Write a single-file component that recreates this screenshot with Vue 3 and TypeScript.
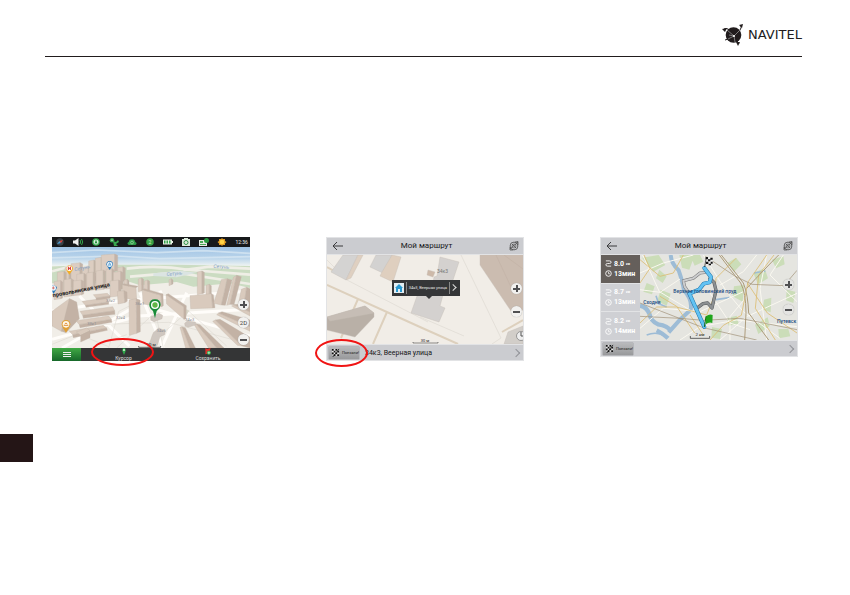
<script setup lang="ts">
interface Block { x: number; y: number; w: number; h: number; d: number }
interface Route { km: string; min: string; active: boolean }

const blocks: Block[] = [
  { x: 45, y: 92, w: 12, h: 50, d: 6 },
  { x: 63, y: 80, w: 27, h: 70, d: 8 },
  { x: 97, y: 92, w: 18, h: 60, d: 7 },
  { x: 116, y: 72, w: 16, h: 64, d: 7 },
  { x: 136, y: 64, w: 18, h: 54, d: 6 },
  { x: 154, y: 54, w: 40, h: 52, d: 9 },
  { x: 203, y: 92, w: 16, h: 44, d: 7 },
  { x: 22, y: 106, w: 20, h: 60, d: 7 },
  { x: 80, y: 112, w: 22, h: 52, d: 7 },
  { x: 110, y: 108, w: 20, h: 54, d: 7 },
  { x: 138, y: 102, w: 22, h: 58, d: 7 },
  { x: 168, y: 98, w: 18, h: 58, d: 7 },
  { x: 190, y: 106, w: 22, h: 54, d: 8 },
  { x: 12, y: 134, w: 20, h: 54, d: 6 },
  { x: 42, y: 128, w: 22, h: 52, d: 7 },
  { x: 70, y: 132, w: 24, h: 44, d: 7 },
  { x: 180, y: 132, w: 26, h: 48, d: 8 },
  { x: 265, y: 126, w: 10, h: 38, d: 6 },
  { x: 283, y: 132, w: 10, h: 34, d: 6 },
  { x: 222, y: 130, w: 10, h: 26, d: 5 },
  { x: 357, y: 128, w: 7, h: 18, d: 5 },
  { x: 442, y: 105, w: 14, h: 68, d: 7 },
  { x: 468, y: 145, w: 10, h: 34, d: 6 },
]

const slabs: string[][] = [
  ['217,146 258,155 260,195 217,184', '217,146 222,143 264,151 258,155'],
  ['277,161 333,178 335,212 279,204', '277,161 284,158 339,174 340,209 335,212 333,178'],
  ['348,176 402,213 402,250 350,204', '348,176 355,173 409,209 408,248 402,250 402,213'],
  ['420,179 484,173 488,216 422,218', '484,173 490,176 495,215 488,216'],
  ['514,131 532,128 514,207 491,202', '532,128 546,132 526,208 514,207'],
  ['550,124 560,118 540,205 530,208', '560,118 574,122 552,206 540,205'],
  ['574,160 590,154 580,219 563,215', '590,154 600,158 600,224 580,219'],
  ['6,226 58,188 70,194 34,286 6,270', '58,188 80,198 88,248 48,290 34,286'],
  ['96,196 170,186 176,198 106,208', '106,208 176,198 176,205 108,214'],
  ['90,226 188,212 194,224 98,238', '98,238 194,224 195,235 100,247'],
  ['78,254 176,240 184,250 88,266', '88,266 184,250 186,259 90,275'],
  ['58,286 160,268 170,276 68,296', '68,296 170,276 172,283 70,305'],
  ['130,176 172,172 180,180 138,186', '138,186 180,180 180,187 139,192'],
  ['237,192 259,188 260,292 238,298', '259,188 270,192 271,287 260,292'],
  ['202,166 222,164 224,200 204,204', '222,164 231,168 232,196 224,200'],
  ['79,288 110,276 120,284 92,298', '92,298 120,284 120,305 92,318'],
  ['390,274 396,272 420,336 407,336', '396,272 406,275 436,336 420,336'],
  ['432,266 438,263 500,336 476,336', '438,263 450,266 522,336 500,336'],
  ['488,256 496,252 576,330 562,328', '496,252 510,250 600,304 600,336 576,330'],
  ['500,236 506,231 600,272 600,286', '506,231 516,227 600,252 600,272'],
  ['545,210 552,206 600,228 600,240', '552,206 562,205 600,218 600,228'],
]

const houses: string[] = [
  '302,242 326,232 338,238 336,248 312,257 302,253',
  '306,300 310,290 326,276 346,284 344,296 330,302 322,328 308,336 292,334 302,312',
  '404,262 412,255 436,258 438,266 414,274 405,270',
]

const routes: Route[] = [
  { km: '8.0', min: '13мин', active: true },
  { km: '8.7', min: '13мин', active: false },
  { km: '8.2', min: '14мин', active: false },
]

const front = (b: Block): string =>
  `${b.x},${b.y + 3} ${b.x + b.w},${b.y} ${b.x + b.w},${b.y + b.h} ${b.x},${b.y + b.h + 3}`
const side = (b: Block): string =>
  `${b.x + b.w},${b.y} ${b.x + b.w + b.d},${b.y + 4} ${b.x + b.w + b.d},${b.y + b.h - 2} ${b.x + b.w},${b.y + b.h}`
</script>

<template>
  <div class="page">
    <header class="masthead">
      <a class="brand" href="#" aria-label="Navitel">
        <svg viewBox="0 0 22 22" class="globe" aria-hidden="true">
          <circle cx="11.500" cy="11" r="7.800" fill="#211c1d" />
          <path d="M2 5q4-2 8 4t7 11M19 2q1 3-5 9-5 4-11 5" fill="none" stroke="#211c1d" stroke-width="1" />
          <path d="M5 6l7 6 1 6M12 12l6-6M12 12l-6 3M7 11l5 1" fill="none" stroke="#bbb" stroke-width=".6" />
          <path d="M0 5l5-1-2 4zM17 1l4-1-1 4zM14 18l4 0-2 4z" fill="#211c1d" />
          <circle cx="12" cy="12" r="1" fill="#fff" />
        </svg>
        <span>NAVITEL</span>
      </a>
    </header>

    <main class="figures">
      <figure class="shot">
        <div class="status">
          <svg viewBox="0 0 10 8"><circle cx="5" cy="4" r="3.700" fill="#39434a" /><path d="M2 6l2.500-3L6 5z" fill="#4ba2da" /><path d="M8 2L4.500 3 6 5z" fill="#e2433a" /></svg>
          <svg viewBox="0 0 10 8"><path d="M0 2.500h2L5.500 0v8L2 5.500H0z" fill="#eee" /><path d="M7 2q1.500 2 0 4M8.500 1q2.500 3 0 6" stroke="#36a64b" fill="none" /></svg>
          <svg viewBox="0 0 10 8"><circle cx="5" cy="4" r="3.800" fill="#32a84a" /><circle cx="5" cy="4" r="2.500" fill="#d9f0dc" /><path d="M3.500 6L5 1.500 6.500 6 5 5z" fill="#1f8a39" /></svg>
          <svg viewBox="0 0 10 8"><circle cx="3" cy="2.200" r="2.200" fill="#39a54e" /><path d="M4 3l3 1 2-2 1 2-3 2 2 2H5z" fill="#39a54e" /><path d="M2 2.200h2" stroke="#d7edd9" stroke-width=".8" /></svg>
          <svg viewBox="0 0 12 8"><path d="M2 7.500q-3-2 0-3.500Q3 0 6 1q3-1 4 3 3 2 0 3.500z" fill="#2e9b47" /><circle cx="6" cy="4.700" r="1.700" fill="none" stroke="#a5d9ad" stroke-width=".8" /></svg>
          <svg viewBox="0 0 10 8"><circle cx="5" cy="4" r="3.800" fill="#37a046" /><text x="5" y="6" text-anchor="middle" font-size="5" fill="#d8f0c8">2</text></svg>
          <svg viewBox="0 0 10 8"><path d="M0 1.500h9v1.500h1v2H9v1.500H0z" fill="#e8f1e6" /><path d="M1 2.500h1.500v3H1zM3.500 2.500H5v3H3.500zM6 2.500h1.500v3H6z" fill="#35a24a" /></svg>
          <svg viewBox="0 0 10 8"><path d="M3 0h4v1h2v7H1V1h2z" fill="#dcebdc" /><circle cx="5" cy="4.500" r="2" fill="none" stroke="#329448" /></svg>
          <svg viewBox="0 0 10 8"><path d="M0 2h8v6H0z" fill="#e5ebe3" /><path d="M1 3h3v2H1zM1 6h6v1H1z" fill="#49a957" /><circle cx="7.500" cy="2.500" r="2.500" fill="#2a9b41" /></svg>
          <svg viewBox="0 0 10 8"><path d="M5 0l1 1 2 0 0 2 1.500 1L8 5.500 8 7 6 7 5 8 4 7 2 7 2 5.500.500 4 2 3 2 1 4 1z" fill="#df9a20" /><circle cx="5" cy="4" r="2.300" fill="#ffd344" /></svg>
          <time>12:36</time>
        </div>
        <div class="canvas city">
          <svg viewBox="6 33 594 303" preserveAspectRatio="xMidYMid slice" role="img" aria-label="3D карта города">
            <defs>
              <linearGradient id="sky" x2="0" y2="1"><stop stop-color="#9ec2e4" /><stop offset=".6" stop-color="#b9d4ea" /><stop offset="1" stop-color="#f0f4f2" /></linearGradient>
            </defs>
            <path fill="#f1eee8" d="M0 30h606v310H0z" />
            <path fill="url(#sky)" d="M0 30h606v60H0z" />
            <path d="M0 50l140-8 180 8 140-6 140 8M0 66l200-6 130 8 270-6" fill="none" stroke="#dce9f3" stroke-width="5" opacity=".7" />
            <path d="M0 92l130-6h250l220 4v66l-60-14-110 10-50-14-110 10-60-20-60 14-150 0z" fill="#cbdcc2" />
            <path d="M6 106l60-16 60 2M230 98q90-12 190 4l180 14M240 122l140-12 220 34M400 102l80-10 120 6" fill="none" stroke="#efeee6" stroke-width="8" />
            <path d="M310 112l80-8 50 6-60 14-70-4z" fill="#dbe4e2" />
            <path d="M6 225l200-30 394-30M6 310l260-70 334-20M88 180l150 150M270 170l70 166M300 215l300 85M36 336l300-170M410 170l-76 166M420 250l80 86" fill="none" stroke="#fffdfa" stroke-width="9" />
            <path d="M6 325l150-60 200-6 244 66M200 336l130-120M300 325l110-95M6 262l170 70M410 220l120 110M176 336l30-110 60-30M120 336l110-40M340 336l-20-90" fill="none" stroke="#d9d4cc" stroke-width="1.500" />
            <path d="M388 238l20-18 10 4-14 22z" fill="#d9d6c8" />
            <g stroke="#c0b2a7" stroke-width="1">
              <template v-for="(b, i) in blocks" :key="i">
                <polygon :points="front(b)" fill="#dccdc1" />
                <polygon :points="side(b)" fill="#c4b4a8" />
              </template>
              <template v-for="(s, i) in slabs" :key="'s' + i">
                <polygon :points="s[0]" fill="#d9cabd" />
                <polygon :points="s[1]" fill="#c3b2a5" />
              </template>
              <polygon v-for="(h, i) in houses" :key="'h' + i" :points="h" fill="#cfc7c0" />
            </g>
            <g class="house-no">
              <text x="168" y="197">33к2</text><text x="198" y="248">32к4</text><text x="112" y="267">33к1</text><text x="256" y="208">36к1</text><text x="320" y="288">34к5</text><text x="406" y="254">34к3</text>
            </g>
            <text x="350" y="120" class="water" transform="rotate(-6 350 120)">Сетунь</text>
            <text x="490" y="95" class="water" transform="rotate(5 490 95)">Сетунь</text>
            <text x="74" y="106" class="water" transform="rotate(-12 74 106)">Сетунь</text>
            <text x="9" y="184" class="street" transform="rotate(-11 9 184)">провольинская улица</text>
            <path d="M50 104q-4-14 8-16 14 2 10 14l-10 14z" fill="#f2ad27" /><circle cx="58" cy="97" r="8" fill="#fff" /><path d="M55 92v10M61 92v10M55 97h6" stroke="#d52d24" stroke-width="3" />
            <path d="M169 86q0-11 10-11t10 11l-10 16z" fill="#2878b9" /><circle cx="179" cy="85" r="8" fill="#eaf5fd" /><path d="M175 89l4-9 4 9M176 87h6" stroke="#3b91cb" fill="none" stroke-width="2" />
            <path d="M2 152q8-9 18 0 2 6-10 22z" fill="#2878b9" /><circle cx="10" cy="156" r="8" fill="#eaf5fd" /><path d="M5 156h9M10 151v9" stroke="#d1473b" stroke-width="2" />
            <path d="M35 266q0-14 13-14t13 14q-2 10-13 24-11-14-13-24z" fill="#e0a035" /><circle cx="48" cy="265" r="10" fill="#fff8e8" /><path d="M41 268h14M44 264q4-6 8 0" stroke="#e0913a" fill="none" stroke-width="3" />
            <path d="M298 207q0-17 17-17t17 17q-1 10-12 18l-5 22-6-22q-11-8-11-18z" fill="#188b39" /><circle cx="315" cy="207" r="12" fill="#fff" /><circle cx="315" cy="207" r="8" fill="#62b547" />
            <text x="290" y="329" class="scale">50 м</text>
            <path d="M266 330v4h66v-4" stroke="#222" fill="none" stroke-width="2" />
          </svg>
          <button class="round plus" aria-label="Приблизить"></button>
          <button class="round mode">2D</button>
          <button class="round minus" aria-label="Отдалить"></button>
        </div>
        <nav class="dock">
          <button class="menu" aria-label="Меню"><i></i><i></i><i></i></button>
          <button class="tool">
            <svg viewBox="0 0 8 8"><path d="M2 2.500Q2 0 4 0t2 2.500Q6 4 4 8 2 4 2 2.500z" fill="#2ea94b" /><circle cx="4" cy="2.300" r="1.100" fill="#e8f4df" /></svg>
            <span>Курсор</span>
          </button>
          <button class="tool">
            <svg viewBox="0 0 8 8"><path d="M1 0l2 1 4-1-1 3 1 3-6 1z" fill="#d6312c" /><circle cx="5" cy="5.500" r="2.300" fill="#2ea94b" /><path d="M5 4v3M3.500 5.500h3" stroke="#fff" stroke-width=".6" /></svg>
            <span>Сохранить</span>
          </button>
        </nav>
        <div class="mark mark-cursor"></div>
      </figure>

      <figure class="shot framed">
        <div class="bar">
          <button class="back" aria-label="Назад"><svg viewBox="0 0 12 8"><path d="M11 4H1M5 0L1 4l4 4" fill="none" stroke="#3b3b3d" /></svg></button>
          <h2>Мой маршрут</h2>
          <button class="globe-btn" aria-label="Обзор"><svg viewBox="0 0 10 10"><circle cx="5" cy="5" r="3.900" fill="none" stroke="#444" stroke-width=".8" /><circle cx="5" cy="5" r="2" fill="none" stroke="#555" stroke-width=".7" /><path d="M1 8l8-7M6 1l3-.500L9 4M1 6v3h3M3 3l4 4" fill="none" stroke="#444" stroke-width=".7" /></svg></button>
        </div>
        <div class="canvas block">
          <svg viewBox="0 0 196 89" preserveAspectRatio="xMidYMid slice" role="img" aria-label="Карта: Веерная улица">
            <path fill="#f1ede7" d="M0 0h196v89H0z" />
            <path d="M0 5L20 25 101 67M93 62l44 19M134 0l40 83-9 6" fill="none" stroke="#dedad3" stroke-width=".7" />
            <path d="M0 30l93 42 38 17M31 44L14 83M60 57L46 89M175 77l21-12M0 12l9 5" fill="none" stroke="#ddd0bd" stroke-width="2" />
            <g stroke="#c4beb7" stroke-width=".4">
              <path d="M16 0h15L19 25 4 17z" fill="#d4d3d2" /><path d="M31 0h5L24 23l-5 2z" fill="#dfd0c1" />
              <path d="M49 0h16l-7 19-15-7z" fill="#d3d2d1" /><path d="M65 0l9 2-8 25-13-6 2-4z" fill="#dfcfbf" />
              <path d="M0 62l38-11 9 7v4L28 82 0 75z" fill="#b9b0a7" /><path d="M0 62l38-11 9 7-44 8z" fill="#c6bdb5" />
              <path d="M153 0h43v55l-10 4-33-49z" fill="#cbbcb0" /><path d="M169 0l15 32M177 0l19 14" fill="none" stroke="#beac9e" />
              <path d="M113 2l19 5-9 27-17-6 1-6 3-1zM90 41l15-7 11 6-3 11 5 2-6 14-28-9z" fill="#d4d1cf" />
              <path d="M101 15l7 2-2 5-6-2z" fill="#cdb9a9" /><path d="M181 77l15-6v18h-19z" fill="#d2cec9" />
            </g>
            <circle cx="194" cy="81" r="4.500" fill="#eee" stroke="#777" stroke-width=".7" /><path d="M194 77v4h3" fill="none" stroke="#555" />
            <text x="110" y="18" class="lot">34к3</text>
            <text x="98" y="87" text-anchor="middle" class="scale-label">30 м</text>
            <path d="M86 87v1h25v-1" stroke="#222" fill="none" stroke-width=".5" />
          </svg>
          <button class="callout">
            <svg viewBox="0 0 10 10"><path fill="#e3eef3" d="M0 0h10v10H0z" /><path d="M1 5l4-4 4 4H8v4H6V6H4v3H2V5z" fill="#2999d1" /></svg>
            <span>34к3, Веерная улица</span><b></b>
          </button>
          <button class="round plus" aria-label="Приблизить"></button>
          <button class="round minus" aria-label="Отдалить"></button>
        </div>
        <div class="foot">
          <button class="go"><svg viewBox="0 0 10 10"><path d="M1 1l7 1 1 6-7 1z" fill="#f5f5f5" /><path d="M1 1h2v2H1zM5 1h2v2H5zM3 3h2v2H3zM7 3h2v2H7zM1 5h2v2H1zM5 5h2v2H5zM3 7h2v2H3zM7 7h2v2H7z" fill="#111" /><path d="M9 1L2 10" stroke="#222" /></svg>Поехали!</button>
          <span class="address">34к3, Веерная улица</span>
          <i class="next"></i>
        </div>
        <div class="mark mark-go"></div>
      </figure>

      <figure class="shot framed">
        <div class="bar">
          <button class="back" aria-label="Назад"><svg viewBox="0 0 12 8"><path d="M11 4H1M5 0L1 4l4 4" fill="none" stroke="#3b3b3d" /></svg></button>
          <h2>Мой маршрут</h2>
          <button class="globe-btn" aria-label="Обзор"><svg viewBox="0 0 10 10"><circle cx="5" cy="5" r="3.900" fill="none" stroke="#444" stroke-width=".8" /><circle cx="5" cy="5" r="2" fill="none" stroke="#555" stroke-width=".7" /><path d="M1 8l8-7M6 1l3-.500L9 4M1 6v3h3M3 3l4 4" fill="none" stroke="#444" stroke-width=".7" /></svg></button>
        </div>
        <div class="split">
          <div class="options">
            <button v-for="(r, i) in routes" :key="i" class="option" :class="{ active: r.active }">
              <span><svg viewBox="0 0 8 8"><path d="M1 1h4q2 0 2 1.500T5 4H3Q1 4 1 5.500T3 7h4" fill="none" stroke="currentColor" /></svg>{{ r.km }}<small>км</small></span>
              <span><svg viewBox="0 0 8 8"><circle cx="4" cy="4" r="3.200" fill="none" stroke="currentColor" /><path d="M4 2v2.300h2" fill="none" stroke="currentColor" stroke-width=".8" /></svg>{{ r.min }}</span>
            </button>
          </div>
          <div class="canvas overview">
            <svg viewBox="0 6 471 255" preserveAspectRatio="xMidYMid slice" role="img" aria-label="Карта маршрутов">
              <path fill="#e5e5e0" d="M0 6h471v255H0z" />
              <path d="M6 14l50-8 20 30-36 20zM118 6h46l-16 44-22-6zM20 90l24 10-8 24-26-8zM62 110l30 12-12 36-28-14zM282 100l30-4-4 50-30-16zM340 60l34-14 10 30-30 18zM372 140l22-6-2 44-24-8zM396 20l34-10 4 24-26 12zM345 215l38-22 6 26-34 24zM216 222l30 6-6 30-26-4zM262 30l26-16 16 20-22 22zM440 110l26 6-6 34-22-8zM58 50l22 20-12 20-20-14zM260 196l30-8 6 24-30 6zM150 6h30l10 20-26 12zM415 228l30 0 6 22-34 6z" fill="#cbddb8" />
              <path d="M92 6q2 26 24 46 12 34 16 60 26 28 20 58l-32 30-34 38" fill="none" stroke="#9dbcd6" stroke-width="12" />
              <path d="M0 158q20 4 28 24 4 22 26 32 30 4 38 20M50 232q20 10 34 24" fill="none" stroke="#9dbcd6" stroke-width="13" />
              <path d="M20 246q30-12 56 4M48 128l8 24 24 10M228 140l40-6M342 60l34-6" fill="none" stroke="#9dbcd6" stroke-width="5" />
              <path d="M0 60L70 30 160 6M0 110l60 8 60-40M8 6l50 110 100 60M0 226l70-60 110 10 130-60M190 6l70 110 50 60 110 80M380 6l-20 100 20 155M430 6l-40 60 81 80M240 261l80-70 151-70M270 261l0-70 50-60M120 261l60-40 110-20 181 20M350 6l-40 50-70 40M210 120l60 90 60 20" fill="none" stroke="#faf8f0" stroke-width="3" />
              <path d="M0 20l60 50 40-10 30-54M0 210l50-48 60 0 90 24 24-60 4-50 60-60M210 261l40-44 54-30 20-100 56-81M402 6l-46 60-10 100 60 95M150 186l40 60M60 130l50 30 54 80M322 90l60 90 89 60M12 6l18 40-30 44" fill="none" stroke="#dcbd72" stroke-width="2.500" />
              <path d="M238 6q30 40 64 84 16 30 16 90l-4 81M244 6q34 42 66 84 14 34 16 90 30 40 60 81M416 6q-40 40-96 100" fill="none" stroke="#ad9c7b" stroke-width="3" />
              <path d="M0 150l190 74 160 37M196 10l90 60 50 24 96 4 39-46M0 190l120 6 70 6 110-6 171 34" fill="none" stroke="#9e8e74" stroke-width="2" />
              <g fill="none" stroke-linejoin="round" stroke-linecap="round">
                <path d="M200 58l-20 2-20 16-30 7 4 18 14 21" stroke="#777" stroke-width="9" />
                <path d="M200 58l-20 2-20 16-30 7 4 18 14 21" stroke="#cdcecf" stroke-width="6" />
                <path d="M210 76l12 12 6 24-12 53-13-15-14 2-16 12" stroke="#55585b" stroke-width="10" />
                <path d="M210 76l12 12 6 24-12 53-13-15-14 2-16 12" stroke="#8c9092" stroke-width="7" />
                <path d="M193 45l20 27-4 16-18 4-14 18-29 12 45 100" stroke="#2276a8" stroke-width="12" />
                <path d="M193 45l20 27-4 16-18 4-14 18-29 12 45 100" stroke="#62c2f3" stroke-width="9" />
              </g>
              <path fill="#eee" d="M197 12l22 2-2 24-20-4z" /><path fill="#111" d="M197 12h7v7h-7zM211 14h7v6h-7zM204 19h7v6h-7zM198 26h7v7h-7zM212 26h6v6h-6zM206 32h7v5h-7z" /><path d="M199 12l-5 30" stroke="#111" stroke-width="2" />
              <path d="M198 190q10-8 20-4l-1 24q-10-4-20 4z" fill="#20a51c" /><path d="M198 190l-5 32" stroke="#126e17" stroke-width="3" />
              <text x="100" y="119" class="place">Верхнее головинский пруд</text>
              <text x="10" y="152" class="place">Сходня</text>
              <text x="411" y="210" class="place">Путевск</text>
              <text x="180" y="250" text-anchor="middle" class="scale">2 км</text>
              <path d="M151 249v7h58v-7" stroke="#222" fill="none" stroke-width="2" />
            </svg>
            <button class="round plus" aria-label="Приблизить"></button>
            <button class="round minus" aria-label="Отдалить"></button>
          </div>
        </div>
        <div class="foot">
          <button class="go"><svg viewBox="0 0 10 10"><path d="M1 1l7 1 1 6-7 1z" fill="#f5f5f5" /><path d="M1 1h2v2H1zM5 1h2v2H5zM3 3h2v2H3zM7 3h2v2H7zM1 5h2v2H1zM5 5h2v2H5zM3 7h2v2H3zM7 7h2v2H7z" fill="#111" /><path d="M9 1L2 10" stroke="#222" /></svg>Поехали!</button>
          <i class="next"></i>
        </div>
      </figure>
    </main>
    <div class="thumb-tab"></div>
  </div>
</template>

<style>
body { background: #fff; }
</style>

<style scoped>
.page { font-family: Roboto, "Noto Sans", sans-serif; color: #222; }
.page * { box-sizing: border-box; }
button { margin: 0; padding: 0; border: 0; background: none; font: inherit; color: inherit; cursor: pointer; }
svg { display: block; }
.masthead { display: flex; justify-content: flex-end; align-items: flex-end; height: 57px; margin: 0 48px 0 45px; padding-bottom: 10px; border-bottom: 1px solid #211c1d; }
.brand { display: flex; align-items: center; gap: 4px; color: #211c1d; text-decoration: none; font: 13px/22px "DejaVu Sans", sans-serif; }
.globe { width: 22px; height: 22px; }
.figures { display: grid; grid-template-columns: repeat(3, 1fr); gap: 76px; align-items: start; padding: 180px 52px 0; }
.shot { position: relative; margin: 0; min-width: 0; }
.status { display: flex; align-items: center; justify-content: space-between; height: 10px; padding: 0 2px 0 3px; background: #17191b; color: #eee; font-size: 5px; }
.status svg { width: 10px; height: 8px; }
.canvas { position: relative; overflow: hidden; }
.canvas > svg { width: 100%; height: 100%; }
.city { aspect-ratio: 198 / 101; }
.block { aspect-ratio: 196 / 89; }
.overview { flex: 1; }
.house-no { font-size: 12px; fill: #8d8f96; }
.water { font-size: 15px; font-style: italic; fill: #84a2c6; }
.street { font-size: 17px; font-weight: 700; fill: #151515; }
.lot { font-size: 5px; fill: #777; }
.scale { font-size: 13px; fill: #222; }
.scale-label { font-size: 4px; fill: #222; }
.place { font-size: 15px; font-weight: 500; fill: #194a80; }
.round { position: absolute; right: 1px; width: 11px; height: 11px; border-radius: 50%; background: #f2f1ef; box-shadow: 0 0 1px #999; color: #444; font-size: 6px; line-height: 11px; text-align: center; }
.plus::before, .minus::before, .plus::after { content: ""; position: absolute; left: 2px; top: 5px; width: 7px; height: 2px; background: #505052; }
.plus::after { left: 5px; top: 2px; width: 2px; height: 7px; }
.city .plus { top: 51%; }
.city .mode { top: 69%; }
.city .minus { top: 86%; }
.block .plus { top: 31%; }
.block .minus { top: 57%; }
.overview .round { right: 3px; background: #e4e4e2; }
.overview .plus { top: 28%; }
.overview .minus { top: 58%; }
.dock { display: grid; grid-template-columns: 29px 85px 1fr; height: 13px; background: #343536; color: #ddd; font-size: 5px; line-height: 6px; }
.menu { display: flex; flex-direction: column; align-items: center; justify-content: center; gap: 1px; background: linear-gradient(#40a844, #17682a); }
.menu i { width: 8px; height: 1px; background: #eee; }
.tool { display: flex; flex-direction: column; align-items: center; }
.tool svg { width: 8px; height: 7px; }
.mark { position: absolute; z-index: 2; border: 2px solid #f01414; border-radius: 50%; height: 28px; pointer-events: none; }
.mark-cursor { left: 39px; bottom: -5px; width: 63px; }
.mark-go { left: -11px; bottom: -6px; width: 53px; }
.framed { padding: 1px; background: #e2e3e5; }
.bar { display: flex; align-items: center; justify-content: space-between; height: 16px; margin-bottom: 1px; padding: 0 4px 0 5px; background: #cbccd0; }
.bar h2 { margin: 0; font-size: 8px; line-height: 12px; font-weight: 400; color: #161618; }
.back svg { width: 12px; height: 8px; }
.globe-btn svg { width: 10px; height: 10px; }
.callout { position: absolute; left: 33%; top: 28%; display: flex; align-items: center; gap: 2px; height: 16px; padding: 0 3px 0 2px; background: #353638; color: #e8e8e8; font-size: 4px; white-space: nowrap; }
.callout::after { content: ""; position: absolute; left: 50%; top: 100%; border: 3px solid transparent; border-top-color: #353638; border-bottom: 0; }
.callout svg { width: 10px; height: 10px; }
.callout span { padding: 3px 2px; border: solid #888; border-width: 0 1px; line-height: 6px; }
.callout b { width: 5px; height: 5px; border: solid #ddd; border-width: 1px 1px 0 0; transform: rotate(45deg) translate(-1px, 1px); }
.foot { display: flex; align-items: center; height: 15px; margin-top: 1px; padding: 0 4px 0 2px; background: #cbccd0; }
.go { display: flex; align-items: center; gap: 2px; width: 30px; height: 12px; padding-left: 2px; background: linear-gradient(#b9babc, #98999b); box-shadow: 0 0 1px #555; color: #222; font-size: 4px; }
.go svg { width: 9px; height: 9px; }
.address { margin-left: 6px; font-size: 7px; line-height: 10px; color: #161618; white-space: nowrap; }
.next { width: 6px; height: 6px; margin-left: auto; border: solid #929398; border-width: 1px 1px 0 0; transform: rotate(45deg); }
.split { display: flex; height: 85px; }
.options { display: grid; grid-template-rows: repeat(3, 1fr); gap: 1px; width: 39px; background: #e2e3e5; }
.option { display: flex; flex-direction: column; justify-content: center; gap: 2px; padding-left: 4px; background: #cfd0d4; color: #fff; font-size: 7px; line-height: 8px; font-weight: 700; text-align: left; }
.option.active { background: #655f5b; }
.option span { display: flex; align-items: center; gap: 2px; }
.option svg { width: 7px; height: 7px; }
.option small { font-size: 3px; align-self: flex-end; }
.thumb-tab { width: 33px; height: 28px; margin-top: 73px; background: #241516; }
</style>
